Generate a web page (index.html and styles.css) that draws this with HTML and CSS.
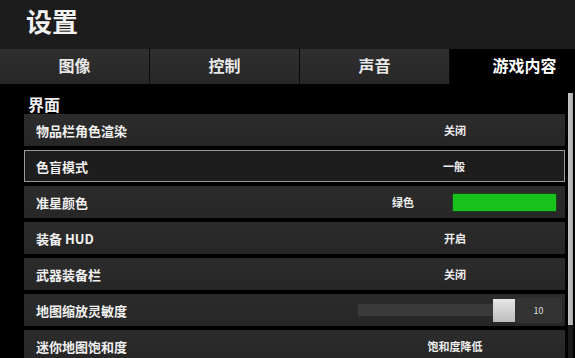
FILE: index.html
```html
<!DOCTYPE html>
<html>

<head>
  <meta charset="UTF-8">
  <title>设置</title>
  <link rel="stylesheet" href="styles.css">
</head>

<body>
  <div class="header">
    <h1>设置</h1>
  </div>

  <div class="tabs">
    <div class="tab">图像</div>
    <div class="tab">控制</div>
    <div class="tab">声音</div>
    <div class="tab active">游戏内容</div>
  </div>

  <div class="content">
    <div class="list">
      <div class="section">界面</div>

      <div class="row">
        <span class="label">物品栏角色渲染</span>
        <span class="value">关闭</span>
      </div>
      <div class="row selected">
        <span class="label">色盲模式</span>
        <span class="value">一般</span>
      </div>
      <div class="row">
        <span class="label">准星颜色</span>
        <span class="value color">
          <span class="color-name">绿色</span>
          <span class="swatch"></span>
        </span>
      </div>
      <div class="row">
        <span class="label">装备 HUD</span>
        <span class="value">开启</span>
      </div>
      <div class="row">
        <span class="label">武器装备栏</span>
        <span class="value">关闭</span>
      </div>
      <div class="row">
        <span class="label">地图缩放灵敏度</span>
        <span class="value slider">
          <span class="track"><span class="thumb"></span></span>
          <span class="num">10</span>
        </span>
      </div>
      <div class="row">
        <span class="label">迷你地图饱和度</span>
        <span class="value">饱和度降低</span>
      </div>
    </div>

    <div class="scrollbar">
      <div class="scroll-thumb"></div>
    </div>
  </div>
</body>

</html>
```

FILE: styles.css
```css
html,
body {
  margin: 0;
  height: 100%;
  overflow: hidden;
}

body {
  background-color: #000;
  color: #fff;
  font-family: "Noto Sans CJK SC", "Noto Sans", sans-serif;
}

.header {
  height: 49px;
  box-sizing: border-box;
  padding: 8px 0 0 26px;
  background-color: #1c1c1c;
}

h1 {
  margin: 0;
  font-size: 26px;
  line-height: 26px;
  font-weight: bold;
  color: #f2f2f2;
}

.tabs {
  display: flex;
  height: 35px;
}

.tab {
  flex: 0 0 150px;
  box-sizing: border-box;
  border-right: 1px solid #0a0a0a;
  background: linear-gradient(#2f2f2f, #272727);
  text-align: center;
  font-size: 16px;
  line-height: 33px;
  font-weight: bold;
  color: #e8e8e8;
}

.tab.active {
  background: #000;
  color: #fff;
}

.content {
  display: flex;
  gap: 3px;
  padding-left: 24px;
}

.list {
  width: 541px;
  padding-top: 12px;
}

.section {
  height: 16px;
  line-height: 16px;
  font-size: 16px;
  font-weight: bold;
  padding-left: 4px;
  margin-bottom: 2px;
  color: #eee;
}

.row {
  display: flex;
  align-items: center;
  height: 32px;
  box-sizing: border-box;
  margin-bottom: 4px;
  padding-left: 12px;
  background: linear-gradient(#2c2c2c, #262626);
}

.row.selected {
  background: #1d1d1d;
  border: 1px solid #9a9a9a;
  padding-left: 11px;
}

.label {
  flex: 1;
  font-size: 13px;
  font-weight: bold;
  color: #f0f0f0;
}

.value {
  width: 220px;
  text-align: center;
  font-size: 11px;
  font-weight: bold;
  color: #eee;
}

.value.color {
  display: flex;
  align-items: center;
  justify-content: flex-end;
}

.color-name {
  margin-right: 39px;
}

.swatch {
  width: 103px;
  height: 17px;
  margin-right: 9px;
  background-color: #17c21a;
  box-shadow: 0 0 2px #0d7a10;
}

.value.slider {
  display: flex;
  align-items: center;
  justify-content: flex-end;
}

.track {
  display: flex;
  align-items: center;
  justify-content: flex-end;
  width: 157px;
  height: 12px;
  background-color: #3a3a3a;
}

.thumb {
  width: 22px;
  height: 23px;
  flex-shrink: 0;
  background: linear-gradient(#e6e6e6, #bdbdbd);
}

.num {
  width: 47px;
  height: 25px;
  line-height: 25px;
  margin-right: 3px;
  background-color: #333;
  font-size: 9px;
  font-weight: normal;
  color: #ddd;
}

.scrollbar {
  width: 5px;
  margin-top: 9px;
  height: 270px;
  background-color: #1a1a1a;
}

.scroll-thumb {
  height: 232px;
  background: linear-gradient(90deg, #c8c8c8, #a8a8a8);
}
```
